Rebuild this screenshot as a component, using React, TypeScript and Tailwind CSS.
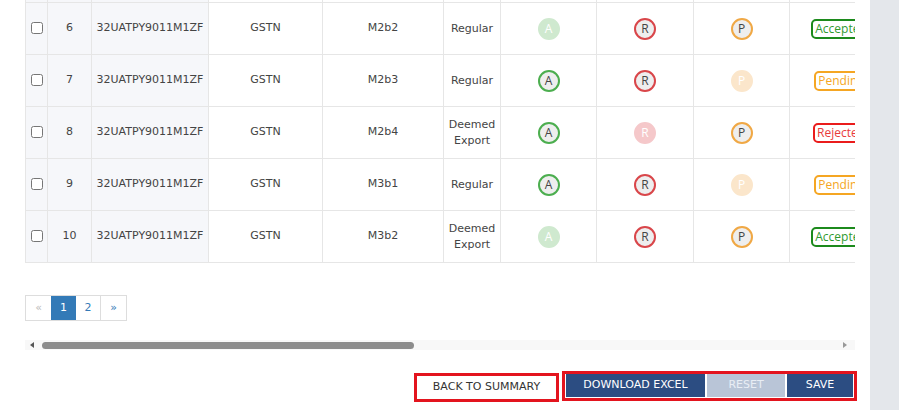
import React from "react";

type Mark = "on" | "off";
type Row = {
  n: number;
  doc: string;
  type: string[];
  a: Mark;
  r: Mark;
  p: Mark;
  status: "Accepted" | "Pending" | "Rejected";
};

const rows: Row[] = [
  { n: 5, doc: "M2b1", type: ["Regular"], a: "on", r: "on", p: "on", status: "Accepted" },
  { n: 6, doc: "M2b2", type: ["Regular"], a: "off", r: "on", p: "on", status: "Accepted" },
  { n: 7, doc: "M2b3", type: ["Regular"], a: "on", r: "on", p: "off", status: "Pending" },
  { n: 8, doc: "M2b4", type: ["Deemed", "Export"], a: "on", r: "off", p: "on", status: "Rejected" },
  { n: 9, doc: "M3b1", type: ["Regular"], a: "on", r: "on", p: "off", status: "Pending" },
  { n: 10, doc: "M3b2", type: ["Deemed", "Export"], a: "off", r: "on", p: "on", status: "Accepted" },
];

function Circle({ letter, mark }: { letter: "A" | "R" | "P"; mark: Mark }) {
  const on: Record<string, string> = {
    A: "border-[#4cae4f] bg-[#eeeeee] text-[#444]",
    R: "border-[#d9464a] bg-[#eeeeee] text-[#444]",
    P: "border-[#f0a845] bg-[#eeeeee] text-[#444]",
  };
  const off: Record<string, string> = {
    A: "border-[#cfe9cf] bg-[#cfe9cf] text-white",
    R: "border-[#f5c8ca] bg-[#f5c8ca] text-white",
    P: "border-[#fbe6cb] bg-[#fbe6cb] text-white",
  };
  return (
    <span
      className={`mx-auto flex h-[22px] w-[22px] items-center justify-center rounded-full border-2 text-[12px] leading-none font-normal ${
        mark === "on" ? on[letter] : off[letter]
      }`}
      style={{ fontFamily: '"Open Sans", sans-serif' }}
    >
      {letter}
    </span>
  );
}

function Badge({ s }: { s: Row["status"] }) {
  const cls =
    s === "Accepted"
      ? "border-[#1c8a1c] text-[#2f9a2f]"
      : s === "Pending"
      ? "border-[#f5a623] text-[#f5a623]"
      : "border-[#ea1c1c] text-[#e83c3c]";
  return (
    <span
      className={`inline-block rounded-[5px] border-2 px-[2px] py-[1px] text-[12px] leading-[14px] ${cls}`}
      style={{ fontFamily: '"Open Sans", sans-serif' }}
    >
      {s}
    </span>
  );
}

export default function App() {
  const cell = "border border-[#e6e6e6] text-center align-middle";
  const sticky = "bg-[#f6f7fa]";
  return (
    <div
      className="flex h-[410px] w-[899px] overflow-hidden bg-white text-[#444]"
      style={{ fontFamily: '"DejaVu Sans", Verdana, sans-serif' }}
    >
      <div className="flex w-[870px] flex-col pl-[25px] pr-[13px]">
        <div className="-mt-[50px] w-[830px] overflow-hidden">
          <table className="table-fixed border-collapse text-[11px]" style={{ width: 974 }}>
            <colgroup>
              <col style={{ width: 22 }} />
              <col style={{ width: 44 }} />
              <col style={{ width: 117 }} />
              <col style={{ width: 114 }} />
              <col style={{ width: 121 }} />
              <col style={{ width: 57 }} />
              <col style={{ width: 96 }} />
              <col style={{ width: 97 }} />
              <col style={{ width: 96 }} />
              <col style={{ width: 103 }} />
              <col style={{ width: 107 }} />
            </colgroup>
            <tbody>
              {rows.map((r) => (
                <tr key={r.n} className="h-[52px]">
                  <td className={`${cell} ${sticky} p-0`}>
                    <input type="checkbox" className="m-0 h-[12px] w-[12px] align-middle" />
                  </td>
                  <td className={`${cell} ${sticky}`}>{r.n}</td>
                  <td className={`${cell} ${sticky}`}>32UATPY9011M1ZF</td>
                  <td className={cell}>GSTN</td>
                  <td className={cell}>{r.doc}</td>
                  <td className={`${cell} leading-[16px]`}>
                    {r.type.map((t) => (
                      <div key={t}>{t}</div>
                    ))}
                  </td>
                  <td className={cell}>
                    <Circle letter="A" mark={r.a} />
                  </td>
                  <td className={cell}>
                    <Circle letter="R" mark={r.r} />
                  </td>
                  <td className={cell}>
                    <Circle letter="P" mark={r.p} />
                  </td>
                  <td className={cell}>
                    <Badge s={r.status} />
                  </td>
                  <td className={cell}></td>
                </tr>
              ))}
            </tbody>
          </table>
        </div>

        <div className="mt-[32px] flex text-[11px]">
          <div className="flex h-[26px] border border-[#dddddd]">
            <span className="flex w-[25px] items-center justify-center text-[#bbbbbb]">«</span>
            <span className="flex w-[25px] items-center justify-center bg-[#337ab7] text-white">1</span>
            <span className="flex w-[25px] items-center justify-center border-r border-[#dddddd] text-[#337ab7]">2</span>
            <span className="flex w-[25px] items-center justify-center text-[#337ab7]">»</span>
          </div>
        </div>

        <div className="mt-[19px] flex h-[10px] w-[830px] items-center bg-[#f8f8f8]">
          <svg width="17" height="10" viewBox="0 0 17 10" className="shrink-0">
            <path d="M5 5 L9 2 L9 8 Z" fill="#555" />
          </svg>
          <div className="h-[7px] w-[372px] shrink-0 rounded-full bg-[#8c8c8c]" />
          <div className="flex-1" />
          <svg width="17" height="10" viewBox="0 0 17 10" className="shrink-0">
            <path d="M5 2 L9 5 L5 8 Z" fill="#999" />
          </svg>
        </div>

        <div className="mt-[21px] flex items-start justify-end gap-[3px] text-[11px]">
          <div className="mt-[2px] border-[3px] border-[#e3141e] bg-white">
            <button className="flex h-[23px] w-[139px] items-center justify-center text-[#333]">
              BACK TO SUMMARY
            </button>
          </div>
          <div className="flex gap-[2px] border-[3px] border-[#e3141e] px-[1px] pb-[1px]">
            <button className="flex h-[23px] w-[139px] items-center justify-center bg-[#2c4d82] text-white">
              DOWNLOAD EXCEL
            </button>
            <button className="flex h-[23px] w-[78px] items-center justify-center bg-[#b9c5d7] text-[#e9eef5]">
              RESET
            </button>
            <button className="flex h-[23px] w-[66px] items-center justify-center bg-[#2c4d82] text-white">
              SAVE
            </button>
          </div>
        </div>
      </div>
      <div className="w-[29px] bg-[#e4e7eb]" />
    </div>
  );
}
